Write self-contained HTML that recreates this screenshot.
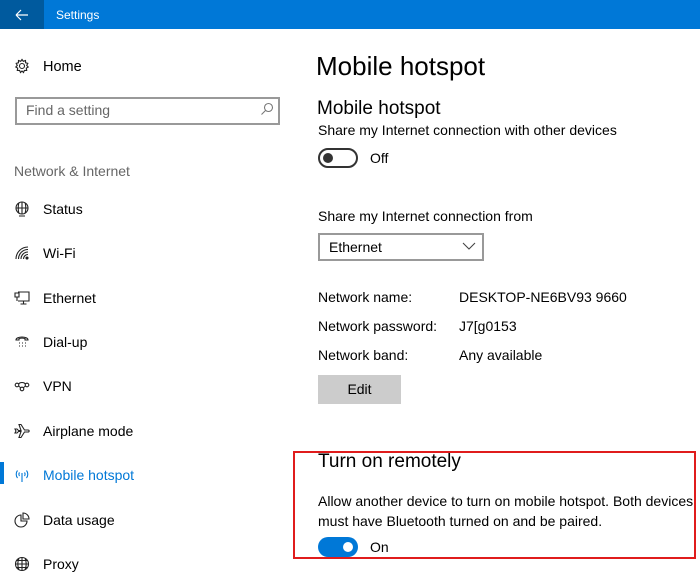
<!DOCTYPE html>
<html><head><meta charset="utf-8"><style>
*{margin:0;padding:0;box-sizing:border-box}
body{width:700px;height:570px;overflow:hidden;background:#fff;font-family:"Liberation Sans",sans-serif;color:#000;position:relative}
.a{position:absolute;white-space:nowrap;line-height:20px}
.t{font-size:14px}
svg{position:absolute;fill:none;stroke:#222;stroke-width:1.1}
</style></head><body>
<div class="a" style="left:0;top:0;width:700px;height:29px;background:#0078d7"></div>
<div class="a" style="left:0;top:0;width:44px;height:29px;background:#005a9e"></div>
<svg style="left:14px;top:7px" width="16" height="16" viewBox="0 0 16 16"><path d="M2 8H14M2 8L7 3M2 8L7 13" stroke="#fff" stroke-width="1.2"/></svg>
<div class="a" style="left:56px;top:5px;font-size:12px;color:#fff">Settings</div>

<svg style="left:14px;top:58px" width="16" height="16" viewBox="0 0 16 16"><circle cx="8" cy="8" r="2.5"/><path d="M8 1.5L9.3 3.3 11.5 2.5 11.6 4.8 13.8 5.4 12.7 7.4 14.2 9 12.3 10.1 12.7 12.4 10.4 12.4 9.5 14.5 8 13 6.5 14.5 5.6 12.4 3.3 12.4 3.7 10.1 1.8 9 3.3 7.4 2.2 5.4 4.4 4.8 4.5 2.5 6.7 3.3Z"/></svg>
<div class="a t" style="left:43px;top:57px;font-size:14.5px">Home</div>
<div class="a" style="left:15px;top:97px;width:265px;height:28px;border:2px solid #999"></div>
<div class="a t" style="left:26px;top:100px;color:#666">Find a setting</div>
<svg style="left:260px;top:102px" width="14" height="14" viewBox="0 0 14 14"><circle cx="8.5" cy="5.5" r="4" stroke="#777"/><path d="M5.5 8.5L1.5 12.5" stroke="#777"/></svg>
<div class="a t" style="left:14px;top:161px;color:#666">Network &amp; Internet</div>

<svg style="left:14px;top:201px" width="16" height="16" viewBox="0 0 16 16"><circle cx="8" cy="7" r="6"/><path d="M2 7H14M8 1V13M5 1.8C4 4 4 10 5 12.2M11 1.8C12 4 12 10 11 12.2M5 15H11"/></svg>
<div class="a t" style="left:43px;top:199px">Status</div>
<svg style="left:14px;top:245px" width="16" height="16" viewBox="0 0 16 16"><path d="M2 14A12 12 0 0 1 14 2M4.5 14A9.5 9.5 0 0 1 14 4.5M7 14A7 7 0 0 1 14 7M9.5 14A4.5 4.5 0 0 1 14 9.5"/><circle cx="13" cy="13" r="1" fill="#222"/></svg>
<div class="a t" style="left:43px;top:243px">Wi-Fi</div>
<svg style="left:14px;top:290px" width="16" height="16" viewBox="0 0 16 16"><path d="M4 2H15V11H4M9.5 11V14M6.5 14H12.5M1 3H5V7H1ZM3 7V11"/></svg>
<div class="a t" style="left:43px;top:288px">Ethernet</div>
<svg style="left:14px;top:334px" width="16" height="16" viewBox="0 0 16 16"><path d="M2 6C2 2 14 2 14 6L11 6 11 4.5C9 4 7 4 5 4.5L5 6Z M5 9H6M8 9H9M11 9H12M5 12H6M8 12H9M11 12H12"/></svg>
<div class="a t" style="left:43px;top:332px">Dial-up</div>
<svg style="left:14px;top:378px" width="16" height="16" viewBox="0 0 16 16"><circle cx="3" cy="7" r="1.8"/><circle cx="13" cy="7" r="1.8"/><circle cx="8" cy="11" r="1.8"/><path d="M4.5 6C6 4 10 4 11.5 6M4.5 8L7 10M11.5 8L9 10"/></svg>
<div class="a t" style="left:43px;top:376px">VPN</div>
<svg style="left:14px;top:423px" width="16" height="16" viewBox="0 0 16 16"><path d="M1 6H3L4.5 7.5H7L5 1.5H7L10.5 7H14C15.5 7 15.5 9 14 9H10.5L7 14.5H5L7 8.5H4.5L3 10H1L2 8Z"/></svg>
<div class="a t" style="left:43px;top:421px">Airplane mode</div>
<div class="a" style="left:0;top:462px;width:4px;height:22px;background:#0078d7"></div>
<svg style="left:14px;top:467px" width="16" height="16" viewBox="0 0 16 16"><g stroke="#0078d7"><path d="M8 6V15M5.5 5.5C4.8 6.5 4.8 8 5.5 9M10.5 5.5C11.2 6.5 11.2 8 10.5 9M3.5 3.5C1.8 5.5 1.8 9 3.5 11M12.5 3.5C14.2 5.5 14.2 9 12.5 11"/></g></svg>
<div class="a t" style="left:43px;top:465px;color:#0078d7">Mobile hotspot</div>
<svg style="left:14px;top:512px" width="16" height="16" viewBox="0 0 16 16"><path d="M7 3A6 6 0 1 0 13 9H7ZM9 1A6 6 0 0 1 15 7H9Z"/></svg>
<div class="a t" style="left:43px;top:510px">Data usage</div>
<svg style="left:14px;top:556px" width="16" height="16" viewBox="0 0 16 16"><circle cx="8" cy="8" r="6.5"/><path d="M1.5 8H14.5M8 1.5V14.5M5 2.5C3.5 5 3.5 11 5 13.5M11 2.5C12.5 5 12.5 11 11 13.5M2.5 4.5H13.5M2.5 11.5H13.5"/></svg>
<div class="a t" style="left:43px;top:554px">Proxy</div>

<div class="a" style="left:316px;top:50px;font-size:26px;line-height:32px">Mobile hotspot</div>
<div class="a" style="left:317px;top:97px;font-size:19px;line-height:24px">Mobile hotspot</div>
<div class="a t" style="left:318px;top:120px">Share my Internet connection with other devices</div>
<div class="a" style="left:318px;top:148px;width:40px;height:20px;border:2px solid #333;border-radius:10px"></div>
<div class="a" style="left:323px;top:153px;width:10px;height:10px;background:#333;border-radius:50%"></div>
<div class="a t" style="left:370px;top:148px">Off</div>
<div class="a t" style="left:318px;top:206px">Share my Internet connection from</div>
<div class="a" style="left:318px;top:233px;width:166px;height:28px;border:2px solid #999"></div>
<div class="a t" style="left:329px;top:237px">Ethernet</div>
<svg style="left:462px;top:241px" width="14" height="10" viewBox="0 0 14 10"><path d="M1 2L7 8 13 2" stroke="#444"/></svg>
<div class="a t" style="left:318px;top:287px">Network name:</div>
<div class="a t" style="left:459px;top:287px">DESKTOP-NE6BV93 9660</div>
<div class="a t" style="left:318px;top:316px">Network password:</div>
<div class="a t" style="left:459px;top:316px">J7[g0153</div>
<div class="a t" style="left:318px;top:345px">Network band:</div>
<div class="a t" style="left:459px;top:345px">Any available</div>
<div class="a t" style="left:318px;top:375px;width:83px;height:29px;background:#ccc;text-align:center;line-height:29px">Edit</div>

<div class="a" style="left:293px;top:451px;width:403px;height:108px;border:2px solid #e01c1c"></div>
<div class="a" style="left:318px;top:450px;font-size:19px;line-height:24px">Turn on remotely</div>
<div class="a t" style="left:318px;top:491px">Allow another device to turn on mobile hotspot. Both devices<br>must have Bluetooth turned on and be paired.</div>
<div class="a" style="left:318px;top:537px;width:40px;height:20px;background:#0078d7;border-radius:10px"></div>
<div class="a" style="left:343px;top:542px;width:10px;height:10px;background:#fff;border-radius:50%"></div>
<div class="a t" style="left:370px;top:537px">On</div>
</body></html>
